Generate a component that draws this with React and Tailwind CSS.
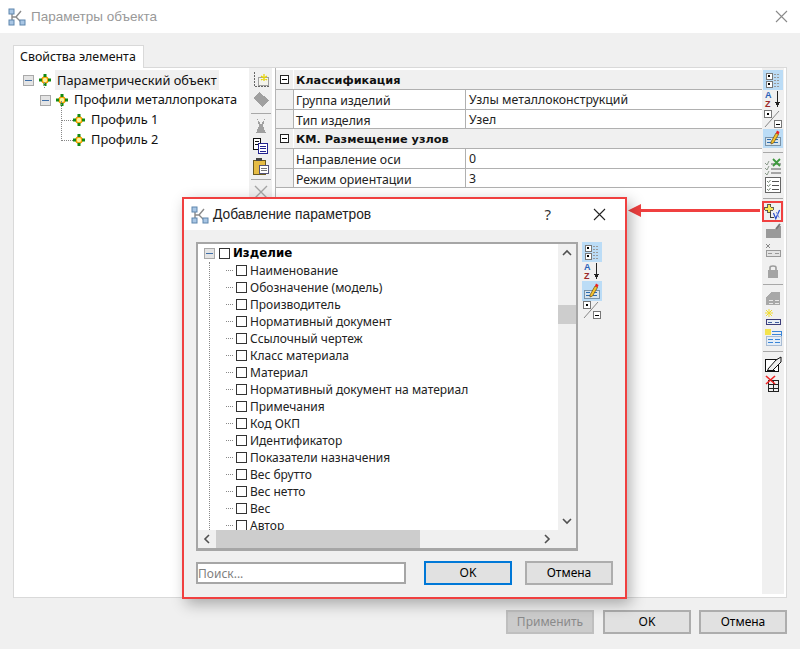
import React from 'react';

// --- small pixel-ish toolbar icons ---
const Svg = ({ children, size = 18 }) => (
  <svg width={size} height={size} viewBox="0 0 18 18" fill="none" shapeRendering="crispEdges">{children}</svg>
);

const AppIcon = () => (
  <svg width="18" height="18" viewBox="0 0 18 18" fill="none">
    <path d="M4 4V13M4 9H8L13 3M8 9L13 14" stroke="#8a8a8a" strokeWidth="1.4" />
    <rect x="1" y="1" width="5" height="5" fill="#a9c6e4" stroke="#5f86ad" />
    <rect x="1" y="12" width="5" height="5" fill="#a9c6e4" stroke="#5f86ad" />
    <rect x="12" y="12" width="5" height="5" fill="#a9c6e4" stroke="#5f86ad" />
  </svg>
);

const NodeIcon = () => (
  <svg width="12" height="12" viewBox="0 0 12 12" fill="none">
    <circle cx="6" cy="6" r="3" fill="#fff3a0" stroke="#f0a000" strokeWidth="1.6" />
    <rect x="4.5" y="0" width="3" height="3" fill="#128a12" />
    <rect x="4.5" y="9" width="3" height="3" fill="#128a12" />
    <rect x="0" y="4.5" width="3" height="3" fill="#128a12" />
    <rect x="9" y="4.5" width="3" height="3" fill="#128a12" />
  </svg>
);

const TreeMinus = () => (
  <span className="flex h-[11px] w-[11px] shrink-0 items-center justify-center border border-[#a9a9a9] bg-[#e4e4e4]">
    <span className="h-px w-[7px] bg-[#3f6fa8]" />
  </span>
);

const CategoryIcon = () => (
  <Svg>
    <rect x="2" y="2" width="6" height="6" fill="#fff" stroke="#777" />
    <rect x="4" y="4" width="2" height="2" fill="#000" />
    <rect x="2" y="10" width="6" height="6" fill="#fff" stroke="#777" />
    <rect x="4" y="12" width="2" height="2" fill="#000" />
    <path d="M10 3H16M10 6H16M10 9H16M10 12H16M10 15H16" stroke="#9a9a9a" strokeDasharray="2 1" />
  </Svg>
);
const SortIcon = () => (
  <Svg>
    <text x="1" y="8" fontSize="9" fontWeight="700" fill="#2a62b8" fontFamily="Liberation Sans">A</text>
    <text x="1" y="17" fontSize="9" fontWeight="700" fill="#9c2a2a" fontFamily="Liberation Sans">Z</text>
    <path d="M13.5 1V13" stroke="#222" strokeWidth="1.5" />
    <path d="M11 12H16L13.5 17Z" fill="#222" />
  </Svg>
);
const PlusMinusIcon = () => (
  <Svg>
    <rect x="0.5" y="0.5" width="7" height="7" fill="#fff" stroke="#777" />
    <rect x="3" y="3" width="2" height="2" fill="#000" />
    <path d="M15 1L1 17" stroke="#888" shapeRendering="auto" />
    <rect x="10.5" y="10.5" width="7" height="7" fill="#fff" stroke="#777" />
    <rect x="12" y="13.5" width="4" height="1" fill="#000" />
  </Svg>
);
const EditIcon = () => (
  <Svg>
    <path d="M1 8H16V16H1Z" fill="#d8e4ec" stroke="#7a93a8" />
    <path d="M3 10H7M3 13H7M10 10H14M10 13H14" stroke="#2b6cb0" />
    <path d="M7 13L12 4L14.5 5.5L9.5 14L7 15Z" fill="#f3c230" stroke="#6a4a10" strokeWidth="0.7" shapeRendering="auto" />
    <path d="M12 4L13 1.5L15.5 3L14.5 5.5Z" fill="#e22" shapeRendering="auto" />
  </Svg>
);
const CheckXIcon = () => (
  <Svg>
    <path d="M1 6L3 8L5 4M1 11L3 13L5 9M1 16L3 18L5 14" stroke="#8a9a8a" shapeRendering="auto" />
    <path d="M7 7H17M7 12H17M7 16H17" stroke="#a5a5a5" strokeWidth="1.5" />
    <path d="M9 2L16 9M16 2L9 9" stroke="#3f9a3f" strokeWidth="1.8" shapeRendering="auto" />
  </Svg>
);
const ListIcon = () => (
  <Svg>
    <rect x="1.5" y="1.5" width="15" height="15" fill="#fff" stroke="#666" />
    <path d="M3 5L4.5 6.5L6.5 4M3 9L4.5 10.5L6.5 8M3 13L4.5 14.5L6.5 12" stroke="#7a8a7a" shapeRendering="auto" />
    <path d="M8 5H15M8 9H15M8 13H15" stroke="#555" />
  </Svg>
);
const AddParamIcon = () => (
  <Svg>
    <path d="M7 8V15H11" stroke="#333" />
    <path d="M4 1H7V4H10V7H7V10H4V7H1V4H4Z" fill="#f7e95a" stroke="#333" strokeWidth="0.8" />
    <path d="M10 10L12.5 16L16.5 7" stroke="#2a4fd0" strokeWidth="1.3" shapeRendering="auto" />
    <path d="M13 9L16 15" stroke="#6f86e0" shapeRendering="auto" />
  </Svg>
);
const GrayFolderIcon = () => (
  <Svg>
    <path d="M2 6H11L14 3H17V15H2Z" fill="#9a9a9a" />
    <path d="M12 6L16 1" stroke="#777" strokeWidth="2" shapeRendering="auto" />
  </Svg>
);
const GrayRowsIcon = () => (
  <Svg>
    <path d="M2 2L6 6M6 2L2 6" stroke="#888" shapeRendering="auto" />
    <rect x="2.5" y="8.5" width="14" height="6" fill="#e4e4e4" stroke="#999" />
    <path d="M4 11.5H8M11 11.5H15" stroke="#999" />
  </Svg>
);
const LockIcon = () => (
  <Svg>
    <path d="M6 8V5.5C6 3.5 12 3.5 12 5.5V8" stroke="#9b9b9b" strokeWidth="1.6" shapeRendering="auto" />
    <rect x="4" y="8" width="10" height="8" fill="#a4a4a4" />
  </Svg>
);
const GrayTableIcon = () => (
  <Svg>
    <path d="M2 8L7 3H16V16H2Z" fill="#a8a8a8" />
    <path d="M5 11H9M5 14H9M11 11H15M11 14H15" stroke="#e8e8e8" />
  </Svg>
);
const SparkRowsIcon = () => (
  <Svg>
    <path d="M5 0V8M1 4H9M2 1L8 7M8 1L2 7" stroke="#f0dc30" shapeRendering="auto" />
    <rect x="2.5" y="10.5" width="14" height="5" fill="#e8eef5" stroke="#3c3c78" />
    <path d="M4 13H8M11 13H15" stroke="#4060a0" />
  </Svg>
);
const SparkTableIcon = () => (
  <Svg>
    <rect x="1" y="1" width="6" height="6" fill="#f3e34e" />
    <rect x="2" y="8" width="15" height="9" fill="#e4edf7" stroke="#a8bcd4" />
    <path d="M8 3H17V8M8 6H17M4 11H9M11 11H16M4 14H9M11 14H16" stroke="#3b86d8" />
  </Svg>
);
const EraseIcon = () => (
  <Svg>
    <rect x="1.5" y="3.5" width="13" height="12" fill="#fff" stroke="#111" strokeWidth="1.3" />
    <path d="M4 13L12 4L17 1V6L8 15H4Z" fill="#eee" stroke="#111" shapeRendering="auto" />
    <path d="M3 15H11" stroke="#111" strokeWidth="1.5" />
  </Svg>
);
const DeleteTableIcon = () => (
  <Svg>
    <path d="M4.5 5.5H14.5V16.5H4.5ZM4.5 9.5H14.5M4.5 13H14.5M9.5 5.5V16.5" stroke="#222" />
    <path d="M2 1L11 9M11 1L2 9" stroke="#e22" strokeWidth="1.6" shapeRendering="auto" />
  </Svg>
);
const NewIcon = () => (
  <Svg>
    <path d="M2 1V15H17" stroke="#666" strokeDasharray="2 1" />
    <rect x="6.5" y="6.5" width="10" height="8" fill="#f4f4ec" stroke="#a0a0a0" />
    <path d="M12 3V10M9 5L15 9M15 5L9 9" stroke="#e8d400" strokeWidth="1.2" shapeRendering="auto" />
  </Svg>
);
const GrayTagIcon = () => (
  <Svg>
    <path d="M1 7L7 1L17 9L11 16Z" fill="#a0a0a0" />
  </Svg>
);
const GrayCutIcon = () => (
  <Svg>
    <path d="M5 1L9 8L13 1L11 9L14 16H4L7 9Z" fill="#a0a0a0" />
  </Svg>
);
const CopyIcon = () => (
  <Svg>
    <path d="M1.5 1.5H8.5V12.5H1.5Z" fill="#fff" stroke="#111" />
    <path d="M3 4H7M3 7H7" stroke="#111" />
    <path d="M6.5 6.5H15.5V16.5H6.5Z" fill="#fff" stroke="#232390" />
    <path d="M8 9H14M8 11.5H14M8 14H14" stroke="#232390" />
  </Svg>
);
const PasteIcon = () => (
  <Svg>
    <rect x="1" y="3" width="12" height="14" fill="#e6bc44" stroke="#6a5a20" />
    <rect x="4" y="1" width="6" height="3" fill="#444" />
    <rect x="7.5" y="8.5" width="9" height="8" fill="#fff" stroke="#55557a" />
    <path d="M9 11H15M9 13.5H15" stroke="#777" />
  </Svg>
);
const GrayXIcon = () => (
  <Svg>
    <path d="M3 3L15 15M15 3L3 15" stroke="#a5a5a5" strokeWidth="1.4" shapeRendering="auto" />
  </Svg>
);

const CloseX = ({ color }) => (
  <svg width="13" height="13" viewBox="0 0 13 13" fill="none">
    <path d="M1 1L12 12M12 1L1 12" stroke={color} strokeWidth="1.1" />
  </svg>
);

const Chevron = ({ d }) => (
  <svg width="10" height="10" viewBox="0 0 10 10" fill="none">
    <path d={d} stroke="#505050" strokeWidth="1.6" />
  </svg>
);

// --- toolbar pieces ---
const ToolBtn = ({ children, active, h = 'h-[19.5px]' }) => (
  <div className={`flex ${h} w-[20px] shrink-0 items-center justify-center ${active ? 'bg-[#bbdcf6]' : ''}`}>
    {children}
  </div>
);
const Sep = ({ h = 'h-[8px]' }) => (
  <div className={`flex ${h} w-[20px] shrink-0 items-center`}>
    <div className="h-px w-full bg-[#a8a8a8]" />
  </div>
);

const gridSections = [
  { title: 'Классификация', rows: [['Группа изделий', 'Узлы металлоконструкций'], ['Тип изделия', 'Узел']] },
  { title: 'КМ. Размещение узлов', rows: [['Направление оси', '0'], ['Режим ориентации', '3']] },
];

const params = [
  'Наименование', 'Обозначение (модель)', 'Производитель', 'Нормативный документ', 'Ссылочный чертеж',
  'Класс материала', 'Материал', 'Нормативный документ на материал', 'Примечания', 'Код ОКП',
  'Идентификатор', 'Показатели назначения', 'Вес брутто', 'Вес нетто', 'Вес', 'Автор',
];

const Checkbox = () => <span className="block h-[11px] w-[11px] shrink-0 border border-[#333] bg-white" />;

const DlgButton = ({ children, cls }) => (
  <button className={`flex h-[24px] w-[88px] items-center justify-center text-[12px] ${cls}`}>{children}</button>
);

const App = () => {
  return (
    <div className="relative flex h-[649px] w-[800px] flex-col overflow-hidden bg-[#f0f0f0] font-['Noto_Sans',sans-serif]">
      {/* TITLE */}
      <header className="flex h-[33px] shrink-0 items-center bg-white pl-[8px] pr-[12px]">
        <AppIcon />
        <span className="ml-[5px] pt-px font-['Liberation_Sans',sans-serif] text-[13.5px] text-[#999999]">Параметры объекта</span>
        <span className="ml-auto"><CloseX color="#8a8a8a" /></span>
      </header>

      {/* TAB + PANEL */}
      <div className="pl-[13px] pt-[12px]">
        <div className="relative z-10 -mb-px flex h-[23px] w-[131px] items-center border border-b-0 border-[#d9d9d9] bg-white pl-[6px] text-[12.4px] text-[#111]">
          Свойства элемента
        </div>
        <div className="flex h-[531px] w-[774px] border border-[#d9d9d9] bg-white">
          {/* TREE */}
          <div className="relative w-[235px] shrink-0 pt-[2px] text-[12.8px] text-[#111]">
            <div className="flex h-[20px] items-center pl-[9px]">
              <TreeMinus />
              <span className="ml-[5px]"><NodeIcon /></span>
              <span className="ml-[4px] bg-[#f0f0f0] px-[2px] leading-[20px]">Параметрический объект</span>
            </div>
            <div className="flex h-[20px] items-center pl-[26px]">
              <TreeMinus />
              <span className="ml-[5px]"><NodeIcon /></span>
              <span className="ml-[6px]">Профили металлопроката</span>
            </div>
            {['Профиль 1', 'Профиль 2'].map((p) => (
              <div key={p} className="flex h-[20px] items-center pl-[47px]">
                <span className="w-[12px] border-t border-dotted border-[#888]" />
                <NodeIcon />
                <span className="ml-[6px]">{p}</span>
              </div>
            ))}
            <div className="absolute left-[47px] top-[33px] h-[38px] border-l border-dotted border-[#888]" />
            <div className="absolute left-[30px] top-[14px] h-[6px] border-l border-dotted border-[#888]" />
          </div>

          {/* LEFT TOOLBAR */}
          <div className="flex w-[23px] shrink-0 flex-col items-center bg-[#f0f0f0] pt-[2px]">
            <ToolBtn h="h-[20px]"><NewIcon /></ToolBtn>
            <ToolBtn h="h-[20px]"><GrayTagIcon /></ToolBtn>
            <Sep h="h-[6px]" />
            <ToolBtn h="h-[20px]"><GrayCutIcon /></ToolBtn>
            <ToolBtn h="h-[20px]"><CopyIcon /></ToolBtn>
            <ToolBtn h="h-[20px]"><PasteIcon /></ToolBtn>
            <Sep h="h-[6px]" />
            <ToolBtn h="h-[20px]"><GrayXIcon /></ToolBtn>
          </div>
          <div className="w-[3px] shrink-0 bg-white" />
          <div className="w-[1px] shrink-0 bg-[#b5b5b5]" />

          {/* PROPERTY GRID */}
          <div className="min-w-0 flex-1 pt-[2px] text-[12.3px] text-[#222]">
            {gridSections.map((s) => (
              <div key={s.title}>
                <div className="flex h-[20px] border-b border-[#b0b0b0] bg-[#f0f0f0]">
                  <div className="flex w-[17px] shrink-0 items-center justify-center">
                    <span className="flex h-[9px] w-[9px] items-center justify-center border border-[#222] bg-white">
                      <span className="h-px w-[5px] bg-black" />
                    </span>
                  </div>
                  <div className="flex-1 border-l border-white pl-[2px] font-['DejaVu_Sans',sans-serif] text-[11.3px] font-bold leading-[21px] text-[#111]">{s.title}</div>
                </div>
                {s.rows.map(([k, v]) => (
                  <div key={k} className="flex h-[19.5px] border-b border-[#b0b0b0]">
                    <div className="w-[17px] shrink-0 bg-[#f0f0f0]" />
                    <div className="w-[173px] shrink-0 border-l border-r border-[#b0b0b0] pl-[2px] leading-[21px]">{k}</div>
                    <div className="flex-1 pl-[3px] leading-[20px]">{v}</div>
                  </div>
                ))}
              </div>
            ))}
          </div>

          {/* RIGHT TOOLBAR */}
          <div className="mb-[3px] mr-[2px] flex w-[22px] shrink-0 flex-col items-center bg-[#f0f0f0] pt-[2px]">
            <ToolBtn active><CategoryIcon /></ToolBtn>
            <ToolBtn><SortIcon /></ToolBtn>
            <ToolBtn><PlusMinusIcon /></ToolBtn>
            <ToolBtn active><EditIcon /></ToolBtn>
            <Sep />
            <ToolBtn><CheckXIcon /></ToolBtn>
            <ToolBtn><ListIcon /></ToolBtn>
            <Sep h="h-[6px]" />
            <div className="flex h-[21px] w-[21px] shrink-0 -translate-x-px items-center justify-center border-2 border-[#f04040]"><AddParamIcon /></div>
            <ToolBtn><GrayFolderIcon /></ToolBtn>
            <ToolBtn><GrayRowsIcon /></ToolBtn>
            <ToolBtn><LockIcon /></ToolBtn>
            <Sep />
            <ToolBtn><GrayTableIcon /></ToolBtn>
            <ToolBtn><SparkRowsIcon /></ToolBtn>
            <ToolBtn><SparkTableIcon /></ToolBtn>
            <Sep />
            <ToolBtn><EraseIcon /></ToolBtn>
            <ToolBtn><DeleteTableIcon /></ToolBtn>
          </div>
        </div>
      </div>

      {/* BOTTOM BUTTONS */}
      <div className="flex justify-end pr-[13px] pt-[12px]">
        <DlgButton cls="border-2 border-[#bfbfbf] bg-[#cccccc] text-[#8a8a8a]">Применить</DlgButton>
        <DlgButton cls="ml-[9px] border-2 border-[#adadad] bg-[#e1e1e1] text-black">OK</DlgButton>
        <DlgButton cls="ml-[8px] border-2 border-[#adadad] bg-[#e1e1e1] text-black">Отмена</DlgButton>
      </div>

      {/* ARROW */}
      <div className="absolute left-[628px] top-[204px] flex items-center">
        <svg width="13" height="13" viewBox="0 0 13 13"><path d="M0 6.5L13 0V13Z" fill="#f04040" /></svg>
        <div className="h-[3px] w-[119px] bg-[#f04040]" />
      </div>

      {/* MODAL */}
      <div className="absolute left-[182px] top-[197px] flex h-[402px] w-[445px] flex-col border-2 border-[#f04040] bg-[#f0f0f0] shadow-[4px_5px_14px_rgba(0,0,0,0.3)]">
        <div className="flex h-[31px] shrink-0 items-center bg-white pl-[7px] pr-[19px]">
          <AppIcon />
          <span className="ml-[4px] pt-px font-['Liberation_Sans',sans-serif] text-[13.8px] text-[#222]">Добавление параметров</span>
          <span className="ml-auto text-[15px] text-[#333]">?</span>
          <span className="ml-[42px]"><CloseX color="#222" /></span>
        </div>

        <div className="flex pl-[12px] pt-[12px]">
          {/* LIST */}
          <div className="relative h-[309px] w-[382px] shrink-0 overflow-hidden border-2 border-b-[3px] border-[#a6a6a6] bg-white text-[12px] text-[#222]">
            <div className="h-[289px] w-[362px] overflow-hidden pt-[1px]">
              <div className="flex h-[17px] items-center pl-[6px]">
                <TreeMinus />
                <span className="ml-[4px]"><Checkbox /></span>
                <span className="ml-[3px] font-['DejaVu_Sans',sans-serif] text-[11.8px] font-bold text-black">Изделие</span>
              </div>
              <div className="relative">
                <div className="absolute bottom-0 left-[11px] top-0 border-l border-dotted border-[#888]" />
                {params.map((p) => (
                  <div key={p} className="flex h-[17px] items-center pl-[28px]">
                    <span className="mr-[3px] w-[7px] border-t border-dotted border-[#888]" />
                    <Checkbox />
                    <span className="ml-[3px] whitespace-nowrap pt-px">{p}</span>
                  </div>
                ))}
              </div>
            </div>
            {/* scrollbars */}
            <div className="absolute bottom-0 right-0 top-0 flex w-[18px] flex-col items-center bg-[#f0f0f0]">
              <div className="flex h-[18px] items-center justify-center"><Chevron d="M1 7L5 3L9 7" /></div>
              <div className="mt-[43px] h-[19px] w-full bg-[#cdcdcd]" />
              <div className="mb-[18px] mt-auto flex h-[18px] items-center justify-center"><Chevron d="M1 3L5 7L9 3" /></div>
            </div>
            <div className="absolute bottom-0 left-0 right-0 flex h-[18px] items-center bg-[#f0f0f0]">
              <div className="flex w-[18px] items-center justify-center"><Chevron d="M7 1L3 5L7 9" /></div>
              <div className="h-full w-[204px] bg-[#cdcdcd]" />
              <div className="ml-auto flex w-[38px] justify-start pl-[4px]"><Chevron d="M3 1L7 5L3 9" /></div>
            </div>
          </div>
          {/* DIALOG TOOLBAR */}
          <div className="ml-[4px] flex flex-col items-center">
            <ToolBtn active><CategoryIcon /></ToolBtn>
            <ToolBtn><SortIcon /></ToolBtn>
            <ToolBtn active><EditIcon /></ToolBtn>
            <ToolBtn><PlusMinusIcon /></ToolBtn>
          </div>
        </div>

        {/* FOOTER */}
        <div className="flex items-center pl-[12px] pt-[10px]">
          <input
            readOnly
            placeholder="Поиск..."
            className="h-[22px] w-[210px] border-2 border-[#a6a6a6] bg-white pl-0 text-[12px] outline-none placeholder:text-[#808080]"
          />
          <DlgButton cls="ml-[18px] border-2 border-[#0078d7] bg-[#e1e1e1] text-black">OK</DlgButton>
          <DlgButton cls="ml-[13px] border-2 border-[#adadad] bg-[#e1e1e1] text-black">Отмена</DlgButton>
        </div>
      </div>
    </div>
  );
};

export default App;
